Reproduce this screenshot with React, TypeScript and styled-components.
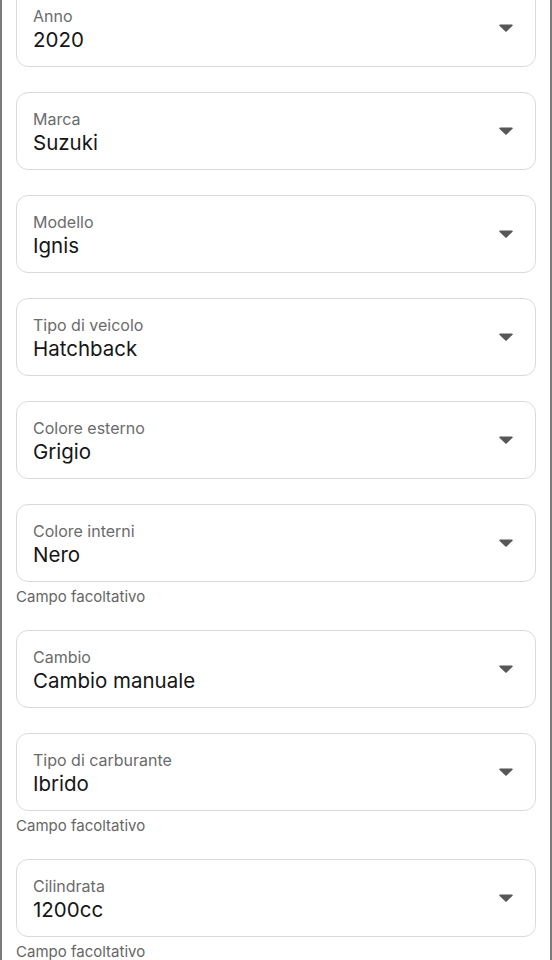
import React from "react";
import styled, { createGlobalStyle } from "styled-components";

const GlobalStyle = createGlobalStyle`
  html, body {
    margin: 0;
    padding: 0;
    background: #ffffff;
  }
  body {
    font-family: Inter, "Liberation Sans", Arial, sans-serif;
    -webkit-font-smoothing: antialiased;
  }
`;

const fields = [
  { label: "Anno", value: "2020" },
  { label: "Marca", value: "Suzuki" },
  { label: "Modello", value: "Ignis" },
  { label: "Tipo di veicolo", value: "Hatchback" },
  { label: "Colore esterno", value: "Grigio" },
  { label: "Colore interni", value: "Nero", optional: true },
  { label: "Cambio", value: "Cambio manuale" },
  { label: "Tipo di carburante", value: "Ibrido", optional: true },
  { label: "Cilindrata", value: "1200cc", optional: true },
];

const Page = styled.div`
  height: 960px;
  overflow: hidden;
  box-sizing: border-box;
  border-left: 2px solid #7b7b7b;
  border-right: 2px solid #7b7b7b;
`;

const Form = styled.div`
  margin-top: -11px;
  padding: 0 14px;
`;

const Group = styled.div`
  margin-bottom: 25px;
`;

const Field = styled.div`
  height: 78px;
  box-sizing: border-box;
  border: 1px solid #dadada;
  border-radius: 12px;
  padding: 0 22px 0 16px;
  display: flex;
  align-items: center;
  background: #fff;
`;

const Texts = styled.div`
  flex: 1;
  display: flex;
  flex-direction: column;
  align-self: flex-start;
  padding-top: 16px;
`;

const Label = styled.span`
  font-size: 16px;
  line-height: 20px;
  color: #6b6b6b;
`;

const Value = styled.span`
  font-size: 20.5px;
  line-height: 27px;
  color: #161616;
`;

const Helper = styled.div`
  padding-top: 7px;
  font-size: 15px;
  line-height: 16px;
  color: #666;
`;

const Caret = () => (
  <svg width="14" height="8" viewBox="0 0 14 8" aria-hidden>
    <path d="M1 0.5h12a0.8 0.8 0 0 1 0.6 1.3L7.6 7.4a0.8 0.8 0 0 1-1.2 0L0.4 1.8A0.8 0.8 0 0 1 1 0.5z" fill="#575757" />
  </svg>
);

export default function App() {
  return (
    <>
      <GlobalStyle />
      <Page>
        <Form>
          {fields.map((f) => (
            <Group key={f.label}>
              <Field>
                <Texts>
                  <Label>{f.label}</Label>
                  <Value>{f.value}</Value>
                </Texts>
                <Caret />
              </Field>
              {f.optional && <Helper>Campo facoltativo</Helper>}
            </Group>
          ))}
        </Form>
      </Page>
    </>
  );
}
